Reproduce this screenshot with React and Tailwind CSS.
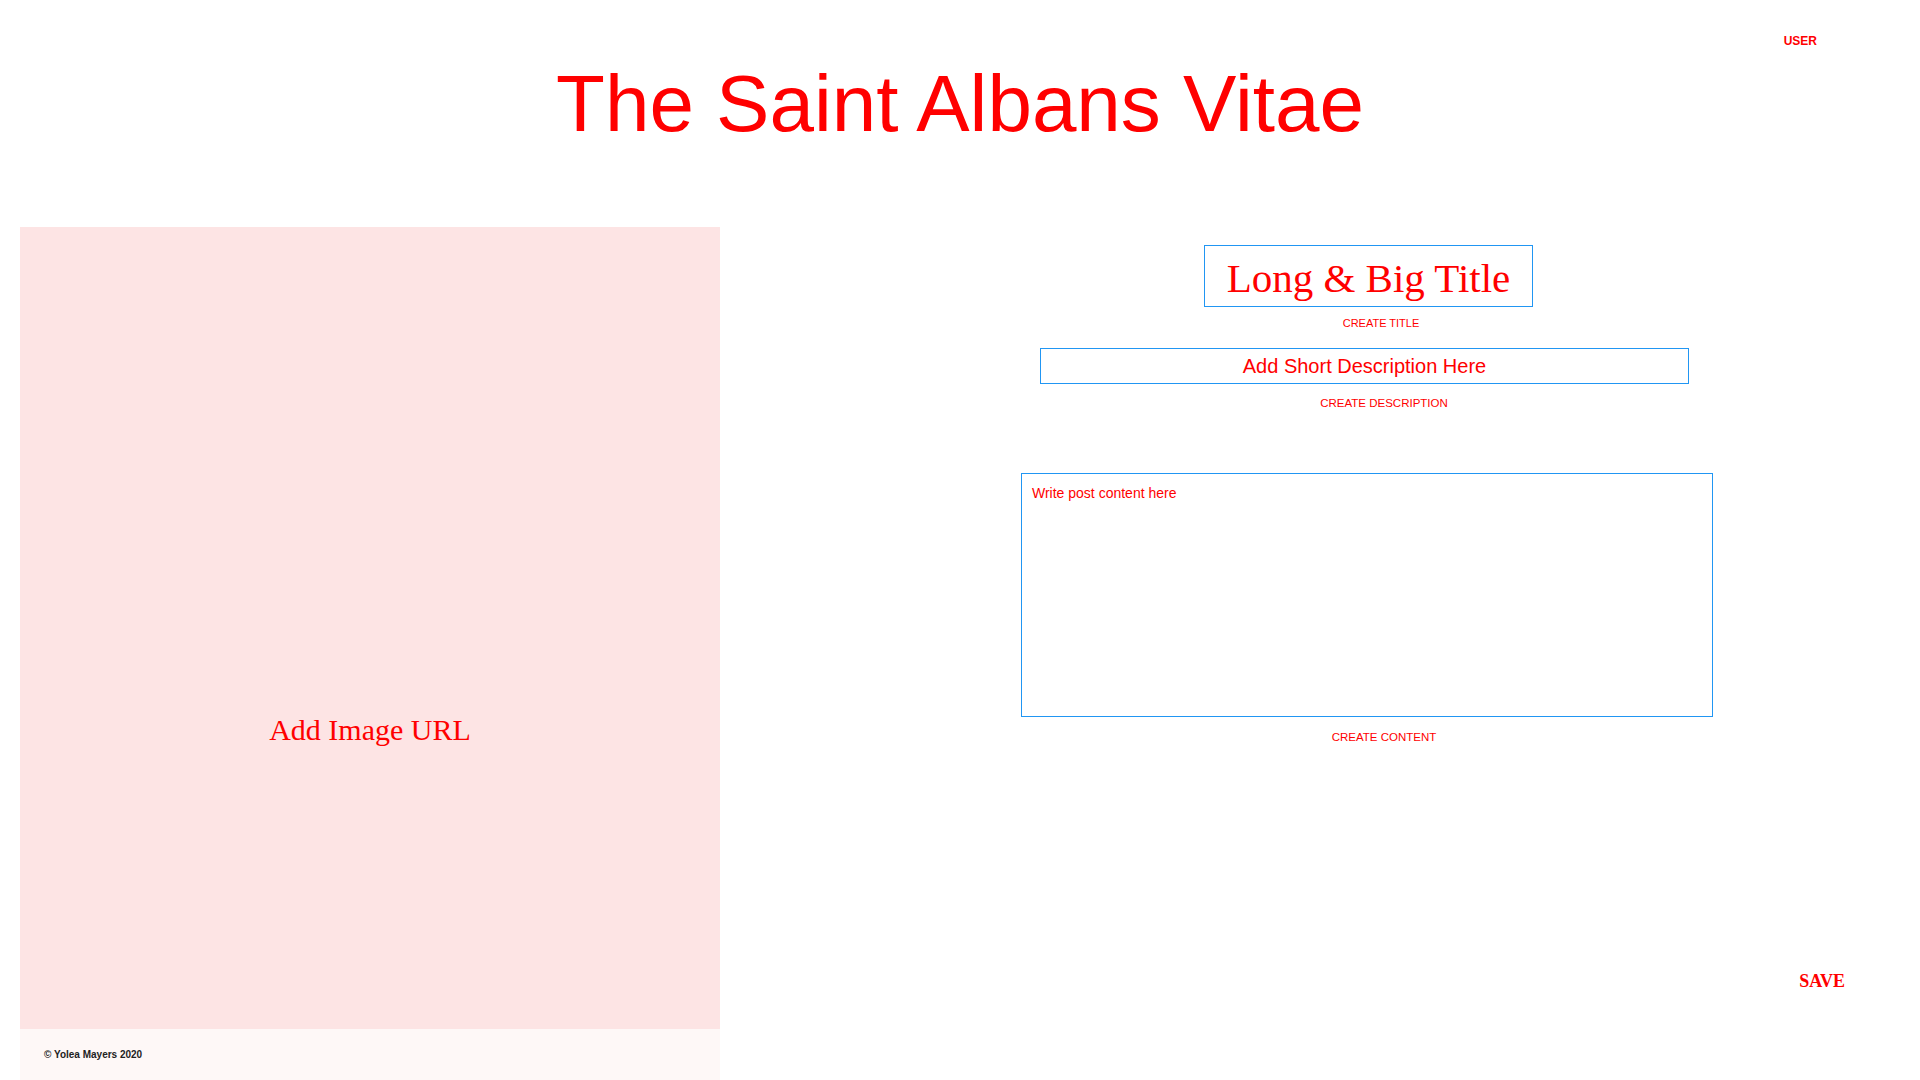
export default function App() {
  return (
    <div className="w-[1920px] h-[1080px] bg-white overflow-hidden" style={{ fontFamily: '"Liberation Sans", Arial, sans-serif' }}>
      <header className="relative h-[227px]">
        <h1 className="pt-[64px] text-center text-[80px] leading-none text-[#ff0000] font-normal" style={{ fontFamily: '"Liberation Sans", Arial, sans-serif' }}>
          The Saint Albans Vitae
        </h1>
        <a className="absolute top-[34px] right-[103px] text-[12px] leading-[14px] font-bold text-[#ff0000]">USER</a>
      </header>
      <main className="flex h-[853px]">
        <section className="ml-[20px] w-[700px] flex flex-col">
          <div className="h-[802px] bg-[#fde4e4] pt-[486px] text-center">
            <span className="text-[30px] leading-[34px] text-[#ff0000]" style={{ fontFamily: '"Liberation Serif", Georgia, serif' }}>Add Image URL</span>
          </div>
          <footer className="h-[51px] bg-[#fef8f7] pl-[24px] flex items-center">
            <span className="text-[10px] font-bold text-[#222222]">© Yolea Mayers 2020</span>
          </footer>
        </section>
        <section className="flex-1 flex flex-col items-center pl-[128px] pt-[18px]">
          <div className="mr-[31px] w-[329px] h-[62px] border border-[#2196f3] flex items-center justify-center pt-[6px]">
            <span className="text-[41px] text-[#ff0000]" style={{ fontFamily: '"Liberation Serif", Georgia, serif' }}>Long &amp; Big Title</span>
          </div>
          <div className="mr-[6px] mt-[10px] text-[11px] leading-[13px] text-[#ff0000]">CREATE TITLE</div>
          <div className="mr-[39px] mt-[18px] w-[649px] h-[36px] border border-[#2196f3] flex items-center justify-center">
            <span className="text-[20px] leading-[24px] text-[#ff0000]">Add Short Description Here</span>
          </div>
          <div className="mt-[12px] text-[11.5px] leading-[14px] text-[#ff0000]">CREATE DESCRIPTION</div>
          <div className="mr-[34px] mt-[63px] w-[692px] h-[244px] border border-[#2196f3] px-[10px] pt-[10px]">
            <div className="text-[14px] leading-[18px] text-[#ff0000]">Write post content here</div>
          </div>
          <div className="mt-[13px] text-[11.5px] leading-[14px] text-[#ff0000]">CREATE CONTENT</div>
          <div className="self-end mr-[75px] mt-[227px] text-[18px] leading-[20px] font-bold text-[#ff0000]" style={{ fontFamily: '"Liberation Serif", "Times New Roman", serif' }}>SAVE</div>
        </section>
      </main>
    </div>
  );
}
